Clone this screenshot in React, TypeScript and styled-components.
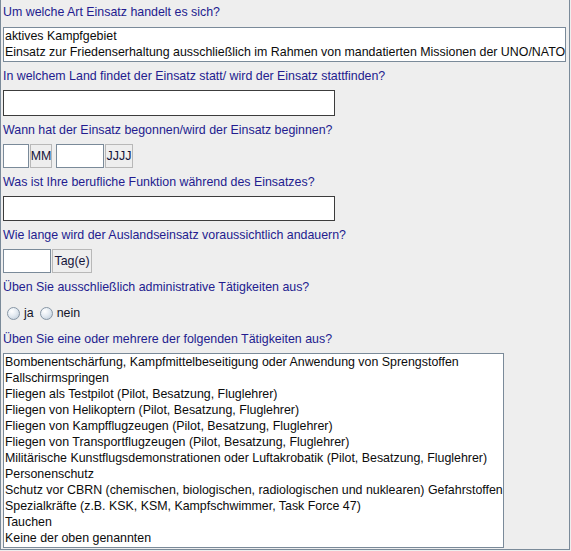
import React, { useState } from 'react';
import styled, { createGlobalStyle } from 'styled-components';

const GlobalStyle = createGlobalStyle`
  html, body {
    margin: 0;
    padding: 0;
    background: #eeeeee;
  }
  body {
    font-family: "Liberation Sans", Arial, sans-serif;
    font-size: 12.4px;
  }
`;

const Panel = styled.div`
  box-sizing: border-box;
  width: 570px;
  height: 550px;
  background: #eeeeee;
  border: 1px solid #7a8a99;
  border-top: none;
  padding: 4px 0 0 2px;
  display: flex;
  flex-direction: column;
  gap: 6px;
`;

const Question = styled.div`
  height: 16px;
  line-height: 16px;
  color: #231c8f;
  white-space: nowrap;
`;

const ListBox = styled.div<{ $width: number }>`
  box-sizing: border-box;
  width: ${p => p.$width}px;
  background: #ffffff;
  border: 1px solid #7a8a99;
  padding: 0 0 1px 1px;
`;

const ListRow = styled.div`
  height: 16px;
  line-height: 16px;
  color: #0c0c0c;
  white-space: nowrap;
`;

const TextField = styled.div<{ $width: number; $height: number; $dark?: boolean }>`
  box-sizing: border-box;
  width: ${p => p.$width}px;
  height: ${p => p.$height}px;
  background: #ffffff;
  border: 1px solid ${p => (p.$dark ? '#3c3c3c' : '#7a8a99')};
`;

const InlineRow = styled.div<{ $height: number }>`
  display: flex;
  align-items: center;
  height: ${p => p.$height}px;
`;

const UnitButton = styled.div<{ $width: number }>`
  box-sizing: border-box;
  width: ${p => p.$width}px;
  height: 24px;
  margin-left: 1px;
  margin-right: 4px;
  border: 1px solid #b8b8b8;
  background: #eeeeee;
  color: #14143a;
  display: flex;
  align-items: center;
  justify-content: center;
  white-space: nowrap;
`;

const RadioOption = styled.label`
  display: flex;
  align-items: center;
  gap: 4px;
  margin-left: 4px;
  margin-right: 2px;
  color: #14142a;
  cursor: pointer;
`;

const RadioDot = styled.span<{ $checked: boolean }>`
  box-sizing: border-box;
  width: 13px;
  height: 13px;
  border-radius: 50%;
  border: 1px solid #8796a5;
  background: radial-gradient(circle at 35% 30%, #ffffff 0%, #e4ebf2 45%, #b9c7d5 100%);
  display: flex;
  align-items: center;
  justify-content: center;

  &::after {
    content: '';
    width: 5px;
    height: 5px;
    border-radius: 50%;
    background: #333333;
    display: ${p => (p.$checked ? 'block' : 'none')};
  }
`;

const einsatzArten = [
  'aktives Kampfgebiet',
  'Einsatz zur Friedenserhaltung ausschließlich im Rahmen von mandatierten Missionen der UNO/NATO',
];

const taetigkeiten = [
  'Bombenentschärfung, Kampfmittelbeseitigung oder Anwendung von Sprengstoffen',
  'Fallschirmspringen',
  'Fliegen als Testpilot (Pilot, Besatzung, Fluglehrer)',
  'Fliegen von Helikoptern (Pilot, Besatzung, Fluglehrer)',
  'Fliegen von Kampfflugzeugen (Pilot, Besatzung, Fluglehrer)',
  'Fliegen von Transportflugzeugen (Pilot, Besatzung, Fluglehrer)',
  'Militärische Kunstflugsdemonstrationen oder Luftakrobatik (Pilot, Besatzung, Fluglehrer)',
  'Personenschutz',
  'Schutz vor CBRN (chemischen, biologischen, radiologischen und nuklearen) Gefahrstoffen',
  'Spezialkräfte (z.B. KSK, KSM, Kampfschwimmer, Task Force 47)',
  'Tauchen',
  'Keine der oben genannten',
];

export default function App() {
  const [admin, setAdmin] = useState<'ja' | 'nein' | null>(null);

  return (
    <>
      <GlobalStyle />
      <Panel>
        <Question>Um welche Art Einsatz handelt es sich?</Question>
        <ListBox $width={563} style={{ marginTop: 1 }}>
          {einsatzArten.map(a => (
            <ListRow key={a}>{a}</ListRow>
          ))}
        </ListBox>

        <Question>In welchem Land findet der Einsatz statt/ wird der Einsatz stattfinden?</Question>
        <TextField $width={332} $height={26} $dark />

        <Question>Wann hat der Einsatz begonnen/wird der Einsatz beginnen?</Question>
        <InlineRow $height={24}>
          <TextField $width={26} $height={24} />
          <UnitButton $width={22}>MM</UnitButton>
          <TextField $width={48} $height={24} />
          <UnitButton $width={28}>JJJJ</UnitButton>
        </InlineRow>

        <Question>Was ist Ihre berufliche Funktion während des Einsatzes?</Question>
        <TextField $width={332} $height={25} $dark />

        <Question>Wie lange wird der Auslandseinsatz voraussichtlich andauern?</Question>
        <InlineRow $height={24}>
          <TextField $width={48} $height={24} />
          <UnitButton $width={40}>Tag(e)</UnitButton>
        </InlineRow>

        <Question>Üben Sie ausschließlich administrative Tätigkeiten aus?</Question>
        <InlineRow $height={24}>
          <RadioOption onClick={() => setAdmin('ja')}>
            <RadioDot $checked={admin === 'ja'} />
            ja
          </RadioOption>
          <RadioOption onClick={() => setAdmin('nein')}>
            <RadioDot $checked={admin === 'nein'} />
            nein
          </RadioOption>
        </InlineRow>

        <Question>Üben Sie eine oder mehrere der folgenden Tätigkeiten aus?</Question>
        <ListBox $width={501}>
          {taetigkeiten.map(t => (
            <ListRow key={t}>{t}</ListRow>
          ))}
        </ListBox>
      </Panel>
    </>
  );
}
